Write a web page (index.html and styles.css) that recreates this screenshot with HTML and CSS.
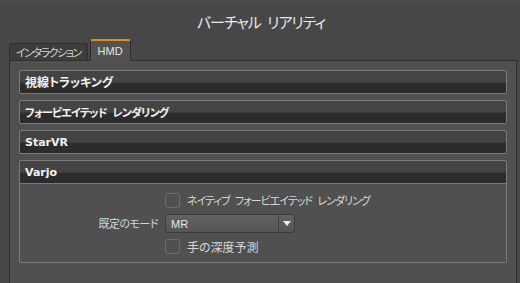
FILE: index.html
```html
<!DOCTYPE html>
<html>
<head>
    <meta charset="UTF-8">
    <link rel="stylesheet" href="styles.css">
</head>
<body>
    <div class="window">
        <div class="titlebar">バーチャル リアリティ</div>

        <div class="tabs">
            <div class="tab kana">インタラクション</div>
            <div class="tab active"><span class="lat">HMD</span></div>
        </div>

        <div class="panel">
            <div class="section">
                <div class="section-head">視線トラッキング</div>
            </div>
            <div class="section">
                <div class="section-head kana-bold">フォービエイテッド レンダリング</div>
            </div>
            <div class="section">
                <div class="section-head"><span class="lat-bold">StarVR</span></div>
            </div>
            <div class="section open">
                <div class="section-head"><span class="lat-bold">Varjo</span></div>
                <div class="section-body">
                    <span></span>
                    <label class="check kana"><span class="box"></span>ネイティブ フォービエイテッド レンダリング</label>

                    <span class="field-label">既定のモード</span>
                    <div class="select">
                        <span class="select-value lat">MR</span>
                        <span class="select-arrow"></span>
                    </div>

                    <span></span>
                    <label class="check"><span class="box"></span>手の深度予測</label>
                </div>
            </div>
        </div>
    </div>
</body>
</html>
```

FILE: styles.css
```css
body {
    margin: 0;
    width: 520px;
    height: 283px;
    overflow: hidden;
    background: #474747;
    font-family: "Noto Sans CJK JP", "Liberation Sans", sans-serif;
    font-size: 12px;
    font-feature-settings: "palt";
    color: #d6d6d6;
}

.window {
    box-sizing: border-box;
    height: 283px;
    display: flex;
    flex-direction: column;
    border-top: 3px solid #4c4c4c;
}

.titlebar {
    flex: none;
    height: 36px;
    padding-left: 2px;
    display: flex;
    align-items: center;
    justify-content: center;
    font-size: 15px;
    letter-spacing: -1px;
    word-spacing: 4px;
    color: #e8e8e8;
    line-height: 1;
}

.lat {
    font-family: "Liberation Sans", sans-serif;
    font-size: 11px;
    letter-spacing: 0;
}

.lat-bold {
    font-family: "DejaVu Sans", sans-serif;
    font-size: 11px;
    font-weight: bold;
}

/* katakana runs are narrower in the original UI font */
.kana {
    font-size: 11px;
    letter-spacing: -1px;
    word-spacing: 4px;
}

.kana-bold {
    font-size: 11px;
    letter-spacing: -0.8px;
    word-spacing: 4px;
}

/* tab strip */
.tabs {
    flex: none;
    display: flex;
    align-items: flex-end;
    gap: 2px;
    height: 21px;
    margin-left: 9px;
    position: relative;
    z-index: 1;
}

.tab {
    box-sizing: border-box;
    height: 17px;
    padding: 0 6px;
    display: flex;
    align-items: center;
    background: #3d3d3d;
    border: 1px solid #2e2e2e;
    border-bottom: none;
    border-radius: 3px 3px 0 0;
    color: #d0d0d0;
    line-height: 1;
}

.tab.kana {
    letter-spacing: -1.5px;
}

.tab.active {
    height: 22px;
    margin-bottom: -1px;
    padding: 0 7px;
    background: #525252;
    border-top: 2px solid #e88a1c;
    color: #e6e6e6;
}

/* panel */
.panel {
    flex: 1;
    box-sizing: border-box;
    width: 508px;
    margin-left: 9px;
    padding: 9px 9px;
    background: #505050;
    border: 1px solid #2f2f2f;
    border-bottom: none;
    display: flex;
    flex-direction: column;
    gap: 6px;
}

.section-head {
    box-sizing: border-box;
    height: 24px;
    padding-left: 5px;
    display: flex;
    align-items: center;
    border: 1px solid #7a7a7a;
    border-radius: 2px;
    background: linear-gradient(#444444 0, #444444 11px, #3b3b3b 11px, #3b3b3b 12px, #2c2c2c 12px);
    color: #f2f2f2;
    font-weight: bold;
    line-height: 1;
}

.section.open .section-head {
    border-radius: 2px 2px 0 0;
}

.section-body {
    display: grid;
    grid-template-columns: 138px 1fr;
    column-gap: 7px;
    row-gap: 6px;
    align-items: center;
    padding: 9px 0 8px 0;
    border: 1px solid #7a7a7a;
    border-top: none;
    border-radius: 0 0 2px 2px;
}

.field-label {
    text-align: right;
    font-size: 11px;
    letter-spacing: -0.5px;
    line-height: 1;
}

.check {
    display: flex;
    align-items: center;
    gap: 6px;
    height: 15px;
    line-height: 1;
}

.box {
    flex: none;
    box-sizing: border-box;
    width: 15px;
    height: 15px;
    margin-right: 1px;
    border: 1px solid #6e6e6e;
    border-radius: 3px;
}

.select {
    box-sizing: border-box;
    width: 130px;
    height: 19px;
    display: flex;
    border: 1px solid #3c3c3c;
    border-radius: 3px;
    background: linear-gradient(#626262, #545454);
}

.select-value {
    flex: 1;
    display: flex;
    align-items: center;
    padding-left: 5px;
    color: #e6e6e6;
    border-right: 1px solid #404040;
}

.select-arrow {
    width: 15px;
    display: flex;
    align-items: center;
    justify-content: center;
}

.select-arrow::before {
    content: "";
    border-left: 4px solid transparent;
    border-right: 4px solid transparent;
    border-top: 5px solid #eeeeee;
}
```
